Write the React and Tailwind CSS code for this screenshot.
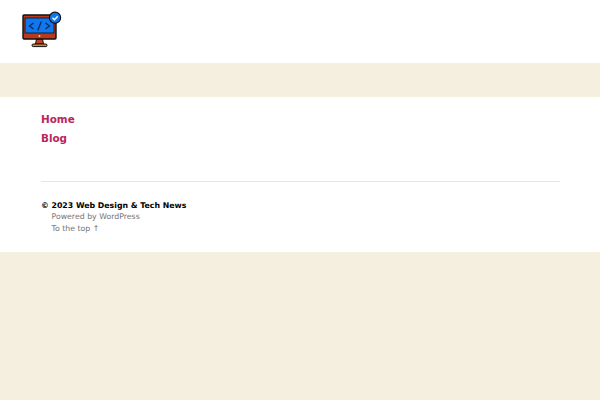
export default function App() {
  return (
    <div className="min-h-[400px] bg-[#f5efe0] font-['DejaVu_Sans',sans-serif]">
      {/* Header */}
      <header className="h-[63px] bg-white pl-[22px] pt-[11px]">
        <svg width="40" height="37" viewBox="0 0 40 37">
          <path d="M14.5 28h6l1 5h-8z" fill="#c0431d" stroke="#111" strokeWidth="1" />
          <rect x="10" y="33" width="15" height="2.6" rx="1.2" fill="#d9822b" stroke="#111" strokeWidth="1" />
          <rect x="1" y="4" width="33" height="24" rx="1" fill="#b83a1b" stroke="#111" strokeWidth="1.4" />
          <rect x="3" y="7" width="29" height="15" fill="#0f78f0" stroke="#111" strokeWidth="0.8" />
          <circle cx="17.5" cy="25" r="0.9" fill="#f6d9c8" />
          <path d="M11.5 12l-4 3 4 3M23.5 12l4 3-4 3M19.3 10.5l-3.6 9" fill="none" stroke="#0b2a55" strokeWidth="1.3" />
          <circle cx="33" cy="6.7" r="5.6" fill="#0f78f0" stroke="#111" strokeWidth="1.2" />
          <path d="M30.5 6.8l2 2 3.2-3.6" fill="none" stroke="#fff" strokeWidth="1.3" />
        </svg>
      </header>

      <div className="h-[34px]" />

      {/* Content */}
      <main className="h-[155px] bg-white pl-[41px] pr-[40px]">
        <nav className="flex flex-col gap-[1.5px] pt-[14px] text-[10.4px] leading-[17.5px] font-bold text-[#b8265c]">
          <a href="#">Home</a>
          <a href="#">Blog</a>
        </nav>
        <footer className="mt-[33.5px] border-t border-[#e5e5e5] pt-[18px] text-[7.8px] leading-[11.3px] text-[#757575]">
          <p className="font-bold text-black">© 2023 Web Design &amp; Tech News</p>
          <p className="pl-[10.5px]">Powered by WordPress</p>
          <p className="pl-[10.5px]">To the top ↑</p>
        </footer>
      </main>
    </div>
  );
}
